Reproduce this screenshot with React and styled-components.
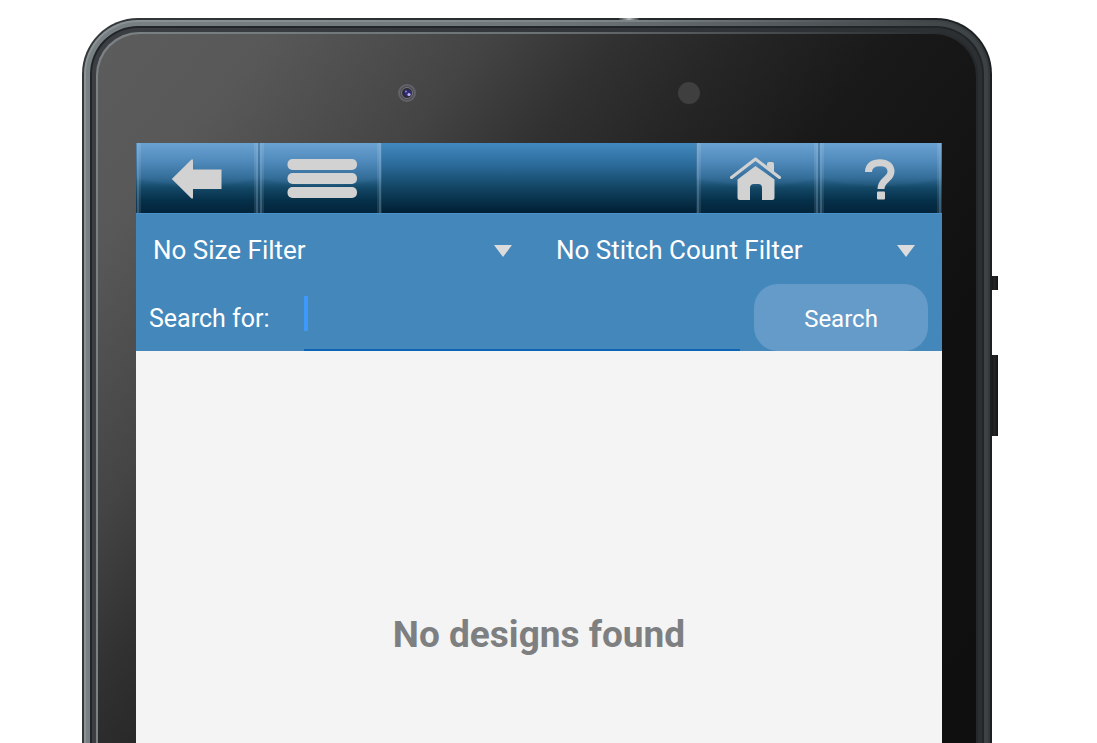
import React from "react";
import styled, { createGlobalStyle } from "styled-components";

const GlobalStyle = createGlobalStyle`
  *, *::before, *::after { box-sizing: border-box; }
  body {
    margin: 0;
    background: #fff;
    font-family: Roboto, "Liberation Sans", sans-serif;
  }
`;

const Page = styled.div`
  display: flex;
  min-height: 100vh;
  padding: 18px 105px 0 82px;
`;

const Device = styled.div`
  position: relative;
  display: flex;
  flex: 1;
  min-width: 0;
`;

const SideKey = styled.span`
  position: absolute;
  left: 100%;
  top: ${(p) => p.$top}px;
  width: 6px;
  height: ${(p) => p.$height}px;
  background: linear-gradient(90deg, #16181a, #24272a 40%, #121314);
`;

const TopKey = styled.span`
  position: absolute;
  left: 59%;
  top: 0;
  width: 20px;
  height: 2px;
  background: linear-gradient(90deg, #3a3e40, #b8bcbd, #3a3e40);
`;

const Ring = styled.div`
  display: flex;
  flex: 1;
  min-width: 0;
  padding: ${(p) => p.$size} ${(p) => p.$size} 0;
  border-radius: ${(p) => p.$radius}px ${(p) => p.$radius}px 0 0;
  background: ${(p) => p.$fill};
`;

const Face = styled.div`
  display: flex;
  flex-direction: column;
  flex: 1;
  min-width: 0;
  padding: 0 34px 0 38px;
  border-radius: 42px 42px 0 0;
  background: linear-gradient(
    129deg,
    #5c5c5c 0%,
    #585858 12%,
    #444 27%,
    #313131 36%,
    #262626 44%,
    #191919 55%,
    #101010 75%,
    #0f0f0f 100%
  );
`;

const SensorBar = styled.div`
  display: flex;
  justify-content: space-between;
  align-items: center;
  height: 109px;
  padding: 8px 30% 0 32%;
`;

const Sensor = styled.span`
  width: 22px;
  height: 22px;
  border-radius: 50%;
  background: #3f3f3f;
`;

const Screen = styled.main`
  flex: 1;
  background: #f4f4f4;
`;

const Toolbar = styled.nav`
  display: flex;
  height: 71px;
  border-bottom: 1px solid #4b92cc;
  background: linear-gradient(#4289bf, #2c6c9c 30%, #134766 62%, #03273d 92%, #021f33);
`;

const ToolGroup = styled.div`
  display: flex;
  margin-left: ${(p) => (p.$end ? "auto" : "0")};
`;

const ToolButton = styled.button`
  display: flex;
  align-items: center;
  justify-content: center;
  width: 123px;
  height: 70px;
  padding: 2px 0 0;
  border: 0;
  background:
    linear-gradient(90deg, #2b587a55 0 1px, #a5c4dc55 1px 3px, #ffffff18 3px 5px, transparent 5px calc(100% - 5px), #ffffff18 calc(100% - 5px) calc(100% - 3px), #a5c4dc55 calc(100% - 3px) calc(100% - 1px), #2b587a55 calc(100% - 1px)),
    radial-gradient(ellipse 100px 34px at 50% 10px, #5a9ad01a 0 92%, transparent 100%),
    linear-gradient(#6ca4d2, #4c86b7 28%, #2f6892 50%, #134867 64%, #06304a 82%, #02243a);
`;

const Filters = styled.form`
  background: #4487bb;
`;

const FilterRow = styled.div`
  display: grid;
  grid-template-columns: 1fr 1fr;
`;

const Dropdown = styled.div`
  display: grid;
  align-items: center;
  > * {
    grid-area: 1 / 1;
  }
`;

const Select = styled.select`
  appearance: none;
  width: 100%;
  height: 70px;
  padding: 2px 48px 0 17px;
  border: 0;
  outline: 0;
  background: transparent;
  color: #fff;
  font: 400 26px/36px Roboto, "Liberation Sans", sans-serif;
`;

const Chevron = styled.svg`
  justify-self: end;
  margin: 4px 27px 0 0;
  pointer-events: none;
`;

const SearchRow = styled.div`
  display: flex;
  align-items: stretch;
  height: 67px;
  padding: 0 14px 0 13px;
`;

const SearchLabel = styled.label`
  display: flex;
  align-items: center;
  width: 155px;
  padding-top: 3px;
  color: #fff;
  font-size: 25px;
  line-height: 32px;
`;

const SearchField = styled.div`
  position: relative;
  display: flex;
  flex: 1;
  min-width: 0;
  margin-right: 14px;
`;

const SearchInput = styled.input`
  flex: 1;
  min-width: 0;
  padding: 0;
  border: 0;
  border-bottom: 2px solid #0d63b5;
  outline: 0;
  background: transparent;
  color: #fff;
  font: 400 25px/32px Roboto, "Liberation Sans", sans-serif;
`;

const Caret = styled.span`
  position: absolute;
  left: 0;
  top: 12px;
  width: 4px;
  height: 35px;
  border-radius: 1px;
  background: #3f99fa;
`;

const SearchButton = styled.button`
  width: 174px;
  padding: 3px 0 0;
  border: 0;
  border-radius: 24px;
  background: #659bc8;
  color: #fff;
  font: 400 24px/32px Roboto, "Liberation Sans", sans-serif;
`;

const EmptyMessage = styled.p`
  margin: 0;
  padding-top: 260px;
  color: #7d7f80;
  font-size: 37px;
  font-weight: 700;
  line-height: 48px;
  text-align: center;
`;

const ICON = "#d2d2d2";

function CameraLens() {
  return (
    <svg width="22" height="22" viewBox="0 0 22 22" aria-hidden="true">
      <circle cx="13" cy="11" r="8" fill="#4a4a50" stroke="#626268" strokeWidth="2" />
      <circle cx="13" cy="11" r="5.500" fill="#2c2c32" stroke="#77777f" strokeWidth="1" />
      <circle cx="13.500" cy="11" r="3.500" fill="#2d2a70" />
      <circle cx="15" cy="12.500" r="1.600" fill="#c6b4ee" />
      <circle cx="12" cy="9.500" r="1" fill="#8a8ac8" />
    </svg>
  );
}

function BackIcon() {
  return (
    <svg width="54" height="42" viewBox="0 0 54 42" aria-hidden="true">
      <path d="M.8 21 20 2Q22 0 22 3V11.500H50.500V31H22V39Q22 42 20 40Z" fill={ICON} />
    </svg>
  );
}

function MenuIcon() {
  return (
    <svg width="72" height="40" viewBox="0 0 72 40" aria-hidden="true" fill={ICON}>
      <rect x="2.500" y="0" width="69.500" height="11" rx="5" />
      <rect x="2.500" y="14" width="69.500" height="11" rx="5" />
      <rect x="2.500" y="28" width="69.500" height="11" rx="5" />
    </svg>
  );
}

function HomeIcon() {
  return (
    <svg width="58" height="44" viewBox="0 0 58 44" aria-hidden="true" fill={ICON}>
      <path d="M2.500 20.500 26.500 2 50.500 20.500" fill="none" stroke={ICON} strokeWidth="3" strokeLinecap="round" strokeLinejoin="round" />
      <path d="M38 9V7Q38 5 40 5H43Q45 5 45 7V15Z" />
      <path d="M26.500 9 45.500 22.500V40.500Q45.500 43 43 43H33V31Q33 27 29.500 27H25Q21 27 21 31V43H11Q8.500 43 8.500 40.500V22.500Z" />
    </svg>
  );
}

function HelpIcon() {
  return (
    <svg width="34" height="44" viewBox="0 0 34 44" aria-hidden="true">
      <path
        d="M4.500 15C4.500 8.500 9.500 5.800 16 5.800S27 9 27 14.500C27 22.500 17 22.500 17 32"
        fill="none"
        stroke={ICON}
        strokeWidth="7"
      />
      <rect x="13" y="34.500" width="8" height="8" rx="1" fill={ICON} />
    </svg>
  );
}

function FilterSelect({ label, text }) {
  return (
    <Dropdown>
      <Select aria-label={label} defaultValue="none">
        <option value="none">{text}</option>
      </Select>
      <Chevron width="18" height="12" viewBox="0 0 18 12" aria-hidden="true">
        <path d="M0 0H18L9 12Z" fill="#dcdcdc" />
      </Chevron>
    </Dropdown>
  );
}

export default function App() {
  return (
    <>
      <GlobalStyle />
      <Page>
        <Device>
          <Ring $size="2px" $radius={56} $fill="linear-gradient(90deg, #34383a, #1c1f21)">
            <Ring $size="2px" $radius={54} $fill="linear-gradient(90deg, #8b9396, #7d8487 60%, #33383b)">
              <Ring $size="4px" $radius={52} $fill="linear-gradient(90deg, #798083, #70777a 50%, #3c4144)">
                <Ring $size="2px" $radius={48} $fill="#222528">
                  <Ring $size="4px" $radius={46} $fill="linear-gradient(90deg, #3b3e42, #2c2f32)">
                    <Ring $size="2px" $radius={43} $fill="linear-gradient(90deg, #7c8184, #6d7275 50%, #24282a)">
                      <Face>
                        <SensorBar>
                          <CameraLens />
                          <Sensor />
                        </SensorBar>
                        <Screen>
                          <Toolbar>
                            <ToolGroup>
                              <ToolButton type="button" aria-label="Back"><BackIcon /></ToolButton>
                              <ToolButton type="button" aria-label="Menu"><MenuIcon /></ToolButton>
                            </ToolGroup>
                            <ToolGroup $end>
                              <ToolButton type="button" aria-label="Home"><HomeIcon /></ToolButton>
                              <ToolButton type="button" aria-label="Help"><HelpIcon /></ToolButton>
                            </ToolGroup>
                          </Toolbar>
                          <Filters onSubmit={(e) => e.preventDefault()}>
                            <FilterRow>
                              <FilterSelect label="Size" text="No Size Filter" />
                              <FilterSelect label="Stitch count" text="No Stitch Count Filter" />
                            </FilterRow>
                            <SearchRow>
                              <SearchLabel htmlFor="search">Search for:</SearchLabel>
                              <SearchField>
                                <SearchInput id="search" type="text" />
                                <Caret />
                              </SearchField>
                              <SearchButton type="submit">Search</SearchButton>
                            </SearchRow>
                          </Filters>
                          <EmptyMessage>No designs found</EmptyMessage>
                        </Screen>
                      </Face>
                    </Ring>
                  </Ring>
                </Ring>
              </Ring>
            </Ring>
          </Ring>
          <TopKey />
          <SideKey $top={258} $height={14} />
          <SideKey $top={337} $height={81} />
        </Device>
      </Page>
    </>
  );
}
